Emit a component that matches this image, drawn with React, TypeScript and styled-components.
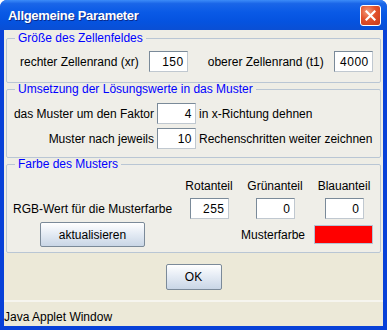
import React from "react";
import styled, { createGlobalStyle } from "styled-components";

const Global = createGlobalStyle`
  html, body { margin: 0; padding: 0; background: #ffffff; }
  body { font-family: "Liberation Sans", Arial, sans-serif; }
  * { box-sizing: border-box; }
`;

const Window = styled.div`
  width: 387px;
  height: 330px;
  display: flex;
  flex-direction: column;
  background: #0841d8;
  border-radius: 7px 7px 0 0;
  overflow: hidden;
`;

const TitleBar = styled.div`
  height: 30px;
  flex: none;
  display: flex;
  align-items: center;
  justify-content: space-between;
  padding: 0 6px 0 8px;
  background: linear-gradient(
    to bottom,
    #3c8cf8 0%,
    #1a66e8 12%,
    #0a5ae6 40%,
    #0553e0 70%,
    #0a4fd4 100%
  );
`;

const Title = styled.span`
  color: #ffffff;
  font-family: "Liberation Sans", Arial, sans-serif;
  font-weight: bold;
  font-size: 13px;
  letter-spacing: -0.3px;
  text-shadow: 1px 1px 0 #0a2a8a;
`;

const CloseButton = styled.div`
  width: 21px;
  height: 21px;
  border-radius: 3px;
  border: 1px solid #ffffff;
  background: radial-gradient(circle at 35% 30%, #f39a7a 0%, #e2512b 45%, #c7391a 100%);
  display: flex;
  align-items: center;
  justify-content: center;
`;

const Client = styled.div`
  flex: 1;
  margin: 0 4px 4px 4px;
  background: #ece9d8;
  display: flex;
  flex-direction: column;
`;

const Content = styled.div`
  background: #eeede5;
  padding: 1px 2px 0 2px;
  display: flex;
  flex-direction: column;
`;

const Group = styled.fieldset<{ $h: number; $first?: boolean }>`
  margin: ${(p) => (p.$first ? "0" : "-1px 0 0 0")};
  height: ${(p) => p.$h}px;
  border: 1px solid #b9c6d4;
  border-radius: 2px;
  padding: 0 6px;
  background: #efeee8;
  min-width: 0;
`;

const Legend = styled.legend`
  color: #0000ff;
  font-size: 12px;
  padding: 0 3px;
  margin-left: 2px;
  line-height: 14px;
`;

const Label = styled.span<{ $align?: string }>`
  font-size: 12px;
  color: #000;
  white-space: nowrap;
  text-align: ${(p) => p.$align || "left"};
`;

const Field = styled.div`
  width: 39px;
  height: 21px;
  border: 1px solid #7a8a99;
  border-right-color: #c0c8d0;
  border-bottom-color: #c0c8d0;
  background: #fff;
  font-size: 12px;
  display: flex;
  align-items: center;
  justify-content: flex-end;
  padding-right: 3px;
  letter-spacing: 0.5px;
`;

const Row1 = styled.div`
  display: flex;
  align-items: center;
  padding-top: 6px;
  padding-left: 7px;
  gap: 10px;
`;

const Spacer = styled.span<{ $w: number }>`
  width: ${(p) => p.$w}px;
  flex: none;
`;

const Grid2 = styled.div`
  display: grid;
  grid-template-columns: 141px 39px auto;
  column-gap: 3px;
  row-gap: 4px;
  align-items: center;
  padding-top: 7px;
`;

const Grid3 = styled.div`
  display: grid;
  grid-template-columns: 163px 66px 66px 72px;
  row-gap: 5px;
  align-items: center;
  padding-top: 8px;
`;

const Header = styled.span`
  font-size: 12px;
  text-align: center;
  line-height: 14px;
`;

const Cell = styled.div`
  display: flex;
  justify-content: center;
`;

const ActionRow = styled.div`
  display: flex;
  align-items: center;
  margin-top: 3px;
  padding: 0 1px 0 27px;
`;

const XButton = styled.div<{ $w: number; $h: number }>`
  width: ${(p) => p.$w}px;
  height: ${(p) => p.$h}px;
  border: 1px solid #7b8a99;
  border-radius: 2px;
  background: linear-gradient(to bottom, #ffffff 0%, #e8eef6 40%, #c9d6e6 100%);
  font-size: 12px;
  display: flex;
  align-items: center;
  justify-content: center;
  color: #000;
`;

const ColorLabel = styled(Label)`
  margin-left: auto;
  margin-right: 9px;
`;

const Swatch = styled.div`
  width: 59px;
  height: 19px;
  background: #ff0000;
  border: 1px solid #b3c3d4;
`;

const ButtonRow = styled.div`
  display: flex;
  justify-content: center;
  padding-top: 11px;
  height: 47px;
  flex: none;
`;

const Status = styled.div`
  border-top: 2px solid #f6f5ef;
  flex: 1;
  display: flex;
  align-items: flex-end;
  padding: 0 0 2px 0;
  font-size: 12px;
  color: #000;
`;

export default function App() {
  return (
    <>
      <Global />
      <Window>
        <TitleBar>
          <Title>Allgemeine Parameter</Title>
          <CloseButton>
            <svg width="11" height="11" viewBox="0 0 11 11">
              <path d="M1.5 1.5 L9.5 9.5 M9.5 1.5 L1.5 9.5" stroke="#fff" strokeWidth="2.2" strokeLinecap="square" />
            </svg>
          </CloseButton>
        </TitleBar>
        <Client>
          <Content>
            <Group $h={52} $first>
              <Legend>Größe des Zellenfeldes</Legend>
              <Row1>
                <Label>rechter Zellenrand (xr)</Label>
                <Field>150</Field>
                <Spacer $w={0} />
                <Label>oberer Zellenrand (t1)</Label>
                <Field>4000</Field>
              </Row1>
            </Group>
            <Group $h={76}>
              <Legend>Umsetzung der Lösungswerte in das Muster</Legend>
              <Grid2>
                <Label $align="right">das Muster um den Faktor</Label>
                <Field>4</Field>
                <Label>in x-Richtung dehnen</Label>
                <Label $align="right">Muster nach jeweils</Label>
                <Field>10</Field>
                <Label>Rechenschritten weiter zeichnen</Label>
              </Grid2>
            </Group>
            <Group $h={96}>
              <Legend>Farbe des Musters</Legend>
              <Grid3>
                <span />
                <Header>Rotanteil</Header>
                <Header>Grünanteil</Header>
                <Header>Blauanteil</Header>
                <Label>RGB-Wert für die Musterfarbe</Label>
                <Cell><Field>255</Field></Cell>
                <Cell><Field>0</Field></Cell>
                <Cell><Field>0</Field></Cell>
              </Grid3>
              <ActionRow>
                <XButton $w={105} $h={25}>aktualisieren</XButton>
                <ColorLabel>Musterfarbe</ColorLabel>
                <Swatch />
              </ActionRow>
            </Group>
          </Content>
          <ButtonRow>
            <XButton $w={56} $h={26}>OK</XButton>
          </ButtonRow>
          <Status>Java Applet Window</Status>
        </Client>
      </Window>
    </>
  );
}
